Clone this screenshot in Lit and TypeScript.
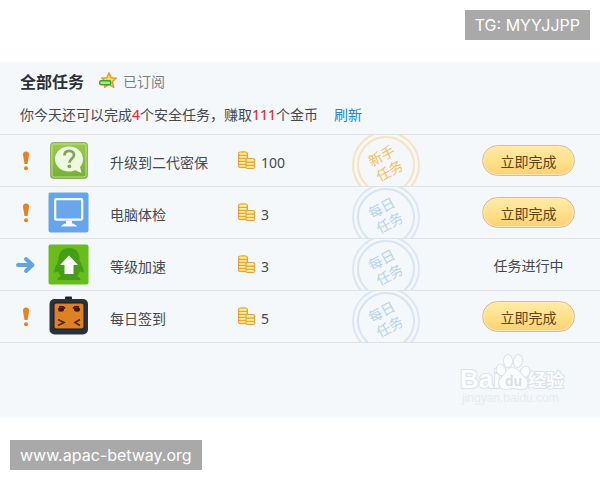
import { LitElement, html, svg, css } from "lit";
import { customElement } from "lit/decorators.js";
import { classMap } from "lit/directives/class-map.js";

type Task = {
  name: string;
  coins: number;
  kind: string;
  icon: unknown;
  running?: boolean;
};

const chatIcon = html`<svg class="icon" viewBox="0 0 42 42" aria-hidden="true">
  <defs>
    <linearGradient id="leaf" x1="0" y1="0" x2="0" y2="1">
      <stop offset="0" stop-color="#9ccb50" />
      <stop offset="1" stop-color="#76ae34" />
    </linearGradient>
  </defs>
  <rect x="2.5" y="2.5" width="37" height="36" rx="3" fill="url(#leaf)" stroke="#8fb45a" />
  <rect x="4" y="4" width="34" height="33" rx="2" fill="none" stroke="#c0e08a" />
  <path d="M21 6.5c-8 0-14 5.500-14 12.500S13 31.500 21 31.500c2.500 0 4.500-.4 6.500-1.200L33.500 33l-1.500-6c2-2.200 3-5 3-8C35 12 29 6.500 21 6.500z" fill="#edf8de" />
  <path d="M16.500 15.500c0-3 2-4.700 4.800-4.700s4.700 1.700 4.700 4.200c0 3.800-4.500 3.700-4.500 7.700" fill="none" stroke="#86a35c" stroke-width="2.800" />
  <circle cx="21.400" cy="26.300" r="1.900" fill="#86a35c" />
</svg>`;

const screenIcon = html`<svg class="icon" viewBox="0 0 42 42" aria-hidden="true">
  <rect x="0.500" y="0.500" width="40" height="40" rx="2" fill="#67a5ea" />
  <rect x="7.200" y="7.200" width="27" height="20.500" rx="1" fill="#6aa7ea" stroke="#f7fbff" stroke-width="2.200" />
  <path d="M18 29h6v2.500c2 .3 4 1.200 5 3H13c1-1.800 3-2.700 5-3z" fill="#f7fbff" />
</svg>`;

const levelIcon = html`<svg class="icon" viewBox="0 0 42 42" aria-hidden="true">
  <rect x="0.500" y="0.500" width="40" height="40" rx="2" fill="#68bd1d" />
  <path d="M21 4c-7 0-10.500 4.500-10.500 11 0 3-4 8-4.500 13 1 1.500 3-.5 4-1 .5 2 1.500 3.500 3 5-2 1-4 2-3.500 4h23c.5-2-1.500-3-3.500-4 1.500-1.500 2.500-3 3-5 1 .5 3 2.500 4 1-.5-5-4.500-10-4.500-13C31.500 8.500 28 4 21 4z" fill="#459f16" />
  <path d="M21 11.500L30 21h-4.500v9h-9v-9H12z" fill="#fff" />
</svg>`;

const faceIcon = html`<svg class="icon" viewBox="0 0 42 42" aria-hidden="true">
  <rect x="17" y="0.500" width="7" height="4" rx="1" fill="#1d2229" />
  <rect x="1.500" y="3" width="38.500" height="35.500" rx="5" fill="#2a323c" />
  <rect x="6" y="7" width="30" height="26" rx="2" fill="#dd8124" stroke="#191715" />
  <path d="M11 11q4-1.500 6 1.500M31 11q-4-1.500-6 1.500" fill="none" stroke="#3a1e0a" stroke-width="1.500" />
  <ellipse cx="13" cy="13.500" rx="3" ry="2.200" fill="#3a1e0a" />
  <ellipse cx="29" cy="13.500" rx="3" ry="2.200" fill="#3a1e0a" />
  <path d="M10 23.500l6 3-6 3M32 23.500l-5 3 5 3" fill="none" stroke="#54290b" stroke-width="1.700" />
</svg>`;

const alertMark = html`<svg class="alert" viewBox="0 0 8 20" role="img" aria-label="待完成">
  <path d="M4 .5c2 0 3.200 1.200 3 3.500L5.500 13h-3L1 4C.8 1.700 2 .5 4 .5z" fill="#e8811f" />
  <circle cx="4" cy="17.200" r="2" fill="#e8811f" />
</svg>`;

const arrowMark = html`<svg class="arrow" viewBox="0 0 20 18" role="img" aria-label="进行中">
  <path d="M2 9h14M10 3l6.500 6-6.500 6" fill="none" stroke="#63a6dc" stroke-width="4" stroke-linecap="round" stroke-linejoin="round" />
</svg>`;

const coin = (x: number, y: number) => svg`
  <rect x=${x} y=${y} width="9" height="3.600" rx="1.600" fill="#ffdf6e" stroke="#e39a3a" stroke-width="0.900" />
  <path d="M${x + 2} ${y + 1.500}h5" stroke="#fff7c0" stroke-width="1.200" />`;

const coinIcon = html`<svg class="coins" viewBox="0 0 19 19" aria-hidden="true">
  <path d="M1 3q0-2 5-2.500 5 .5 5 2.500v4q7-.5 7 2v7q-1 2-5 2-3 0-4-1-7 .5-8-1.500z" fill="#e8993a" />
  ${[13, 10, 7, 4, 1].map((y) => coin(1.500, y))}
  ${[14, 11, 7.500].map((y) => coin(8.800, y))}
</svg>`;

const tasks: Task[] = [
  { name: "升级到二代密保", coins: 100, kind: "新手", icon: chatIcon },
  { name: "电脑体检", coins: 3, kind: "每日", icon: screenIcon },
  { name: "等级加速", coins: 3, kind: "每日", icon: levelIcon, running: true },
  { name: "每日签到", coins: 5, kind: "每日", icon: faceIcon },
];

@customElement("task-row")
export class TaskRow extends LitElement {
  static properties = { task: { attribute: false } };
  declare task: Task;

  static styles = css`
    :host {
      display: grid;
      grid-template-columns: 48px 62px 127fr 115fr 130fr 93px;
      align-items: center;
      height: 51px;
      padding-right: 25px;
      border-bottom: 1px solid #dde2e7;
      color: #44494e;
      font-size: 14px;
    }
    svg { display: block; }
    .mark { padding-left: 16px; }
    .alert { width: 8px; height: 20px; margin-left: 6px; }
    .arrow { width: 20px; height: 18px; }
    .icon { width: 42px; height: 42px; }
    .name { padding-top: 2px; }
    .reward { display: flex; align-items: center; gap: 5px; }
    .coins { width: 19px; height: 19px; }
    .amount { padding-top: 4px; font-family: "Noto Sans", "Noto Sans CJK SC", sans-serif; }
    .stamp { width: 70px; height: 51px; font-size: 14px; color: #b9d3ea; }
    .ring { fill: none; stroke: #dfe6f2; stroke-width: 2; }
    .inner { fill: none; stroke: #dae3f0; stroke-width: 2; }
    .new { color: #f4c069; }
    .new .ring, .new .inner { stroke: #f5e4bd; }
    .action { text-align: center; }
    button {
      display: block;
      width: 100%;
      height: 31px;
      padding: 0;
      border: 1px solid #d9bd91;
      border-radius: 16px;
      background: linear-gradient(#ffeaa6, #ffe18a 50%, #fdcf79);
      box-shadow: inset 0 0 0 1px #ffe9b4;
      color: #57451f;
      font: inherit;
      cursor: pointer;
    }
  `;

  render() {
    const t = this.task;
    return html`
      <div class="mark">${t.running ? arrowMark : alertMark}</div>
      ${t.icon}
      <div class="name">${t.name}</div>
      <div class="reward">${coinIcon}<span class="amount">${t.coins}</span></div>
      <svg class=${classMap({ stamp: true, new: t.kind === "新手" })} viewBox="0 0 70 51">
        <circle class="ring" cx="34" cy="30" r="33" />
        <circle class="inner" cx="34" cy="30" r="28" />
        <g transform="rotate(-28 34 29)" fill="currentColor" text-anchor="middle">
          <text x="34" y="25">${t.kind}</text>
          <text x="34" y="42">任务</text>
        </g>
      </svg>
      <div class="action">
        ${t.running ? html`<span>任务进行中</span>` : html`<button type="button">立即完成</button>`}
      </div>
    `;
  }
}

@customElement("app-root")
export class AppRoot extends LitElement {
  static styles = css`
    :host {
      display: flex;
      flex-direction: column;
      align-items: flex-start;
      gap: 22px;
      padding: 10px 0;
      background: #fff;
      color: #44494e;
      font: 14px/20px "Noto Sans CJK SC", sans-serif;
    }
    .tag {
      margin: 0 10px;
      padding: 0 10px;
      background: #a9a9a9;
      color: #fff;
      font: 16px/30px Inter, sans-serif;
      text-decoration: none;
    }
    .contact { align-self: flex-end; }
    .panel {
      position: relative;
      align-self: stretch;
      padding-bottom: 75px;
      background: #f4f8fb;
    }
    .head {
      display: flex;
      align-items: center;
      padding: 9px 20px 0;
    }
    h1 { margin: 0; font-size: 16px; line-height: 20px; color: #2d3136; }
    .star { width: 18px; height: 18px; margin: 0 6px 0 15px; }
    .subscribed { color: #7b8085; }
    .summary {
      margin: 0;
      padding: 13px 20px 9px;
      border-bottom: 1px solid #dde2e7;
    }
    .count { font-family: "Noto Sans", sans-serif; font-weight: 500; color: #e03238; }
    .refresh { margin-left: 16px; color: #2189c8; text-decoration: none; }
    ul { margin: 0; padding: 0; list-style: none; }
    .watermark {
      position: absolute;
      right: 30px;
      bottom: 10px;
      width: 112px;
      height: 56px;
    }
    .wm {
      fill: #fcfdfe;
      stroke: #dde2e6;
      stroke-width: 2;
      paint-order: stroke;
    }
    .brand { font: bold 26px "Liberation Sans", sans-serif; }
    .cjk { font: bold 18px "Noto Sans CJK SC", sans-serif; }
    .url { font: 12px "Liberation Sans", sans-serif; fill: #e6eaed; }
    .du { font: bold 14px "Liberation Sans", sans-serif; fill: #d9dfe4; }
  `;

  render() {
    return html`
      <div class="tag contact">TG: MYYJJPP</div>
      <main class="panel">
        <header class="head">
          <h1>全部任务</h1>
          <svg class="star" viewBox="0 0 18 18" aria-hidden="true">
            <path d="M10 0.800l2 5 5.300.3-4 3.700 1.500 5.600-4.800-3-4.500 3 1.200-5.600-4-3.700 5.200-.3z" fill="#fbd76a" stroke="#e39a2b" stroke-width="1.400" stroke-linejoin="round" />
            <rect x="0.700" y="8.700" width="11" height="4" rx="1.500" fill="#aee58a" stroke="#35a52a" stroke-width="1.400" />
          </svg>
          <span class="subscribed">已订阅</span>
        </header>
        <p class="summary">你今天还可以完成<b class="count">4</b>个安全任务，赚取<b class="count">111</b>个金币<a class="refresh" href="#">刷新</a></p>
        <ul>
          ${tasks.map((t) => html`<li><task-row .task=${t}></task-row></li>`)}
        </ul>
        <svg class="watermark" viewBox="0 0 112 56">
          <text class="wm brand" x="2" y="36">Bai</text>
          <g class="wm">
            <ellipse cx="43" cy="18" rx="4" ry="5.500" transform="rotate(-20 43 18)" />
            <ellipse cx="50" cy="9" rx="4" ry="6" />
            <ellipse cx="60" cy="9" rx="4" ry="6" transform="rotate(12 60 9)" />
            <ellipse cx="67" cy="20" rx="4" ry="5.500" transform="rotate(20 67 20)" />
            <path d="M54 16c-5 0-6 6-10 9-4 3-4 11 2 12 4 .5 6-1 9-1s6 1.500 10 1c6-1 6-9 1-12-4-3-6-9-12-9z" />
          </g>
          <text class="du" x="47" y="34">du</text>
          <text class="wm cjk" x="70" y="35">经验</text>
          <text class="url" x="4" y="50">jingyan.baidu.com</text>
        </svg>
      </main>
      <a class="tag site" href="#">www.apac-betway.org</a>
    `;
  }
}
